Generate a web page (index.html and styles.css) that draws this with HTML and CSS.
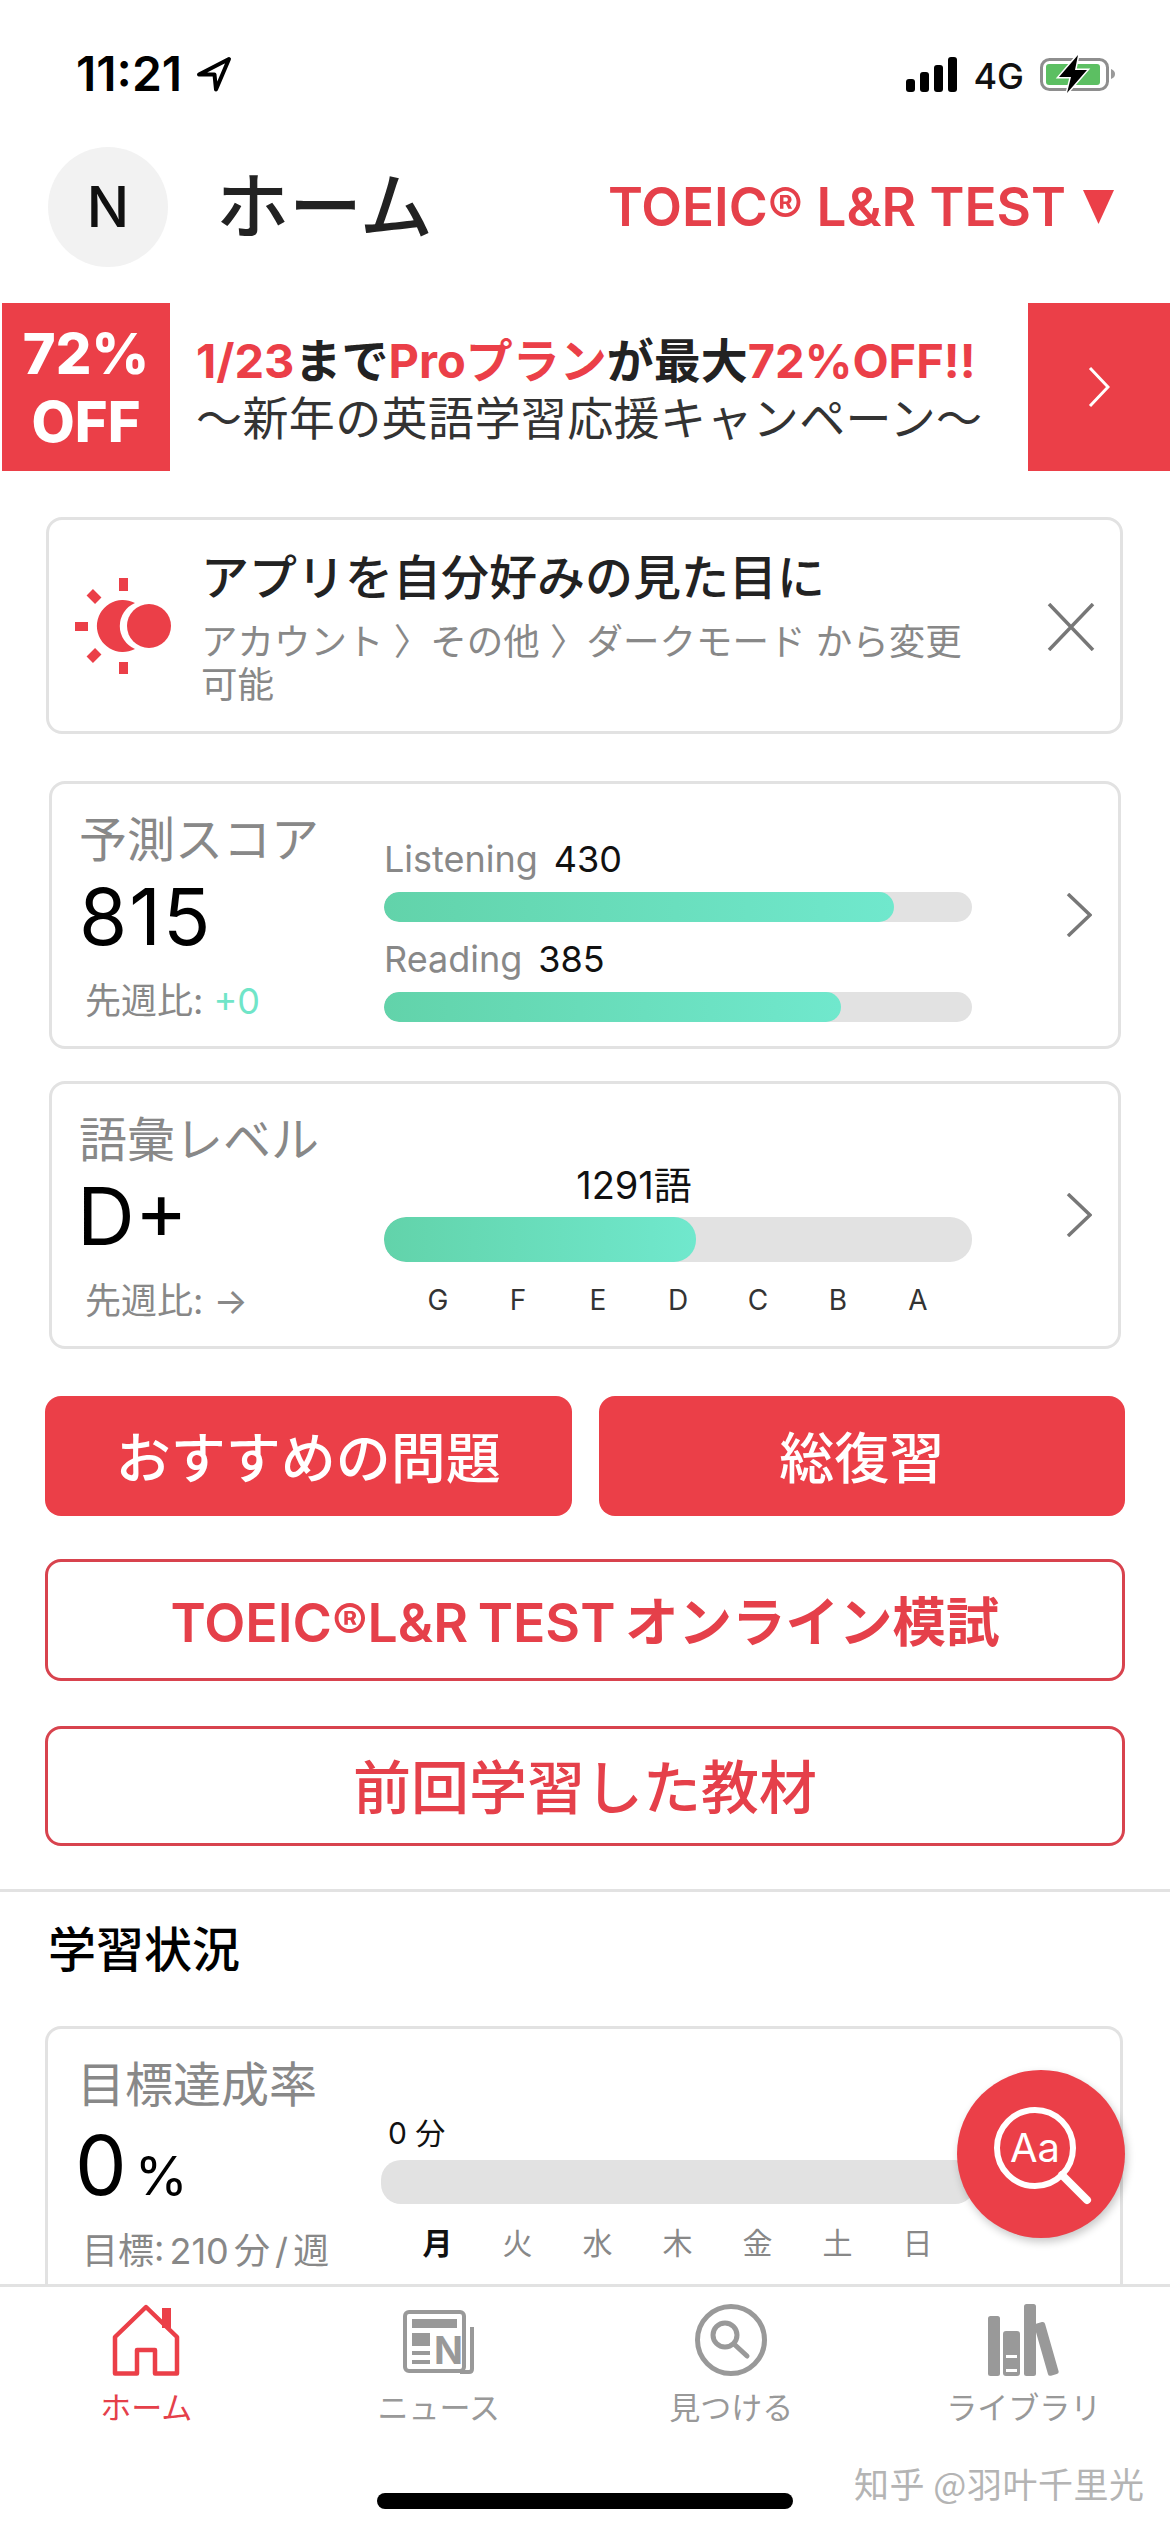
FILE: index.html
```html
<!DOCTYPE html>
<html lang="ja">
<head>
<meta charset="utf-8">
<title>ホーム</title>
<link rel="stylesheet" href="styles.css">
</head>
<body>
<div class="page">
  <main class="main">
    <div class="status">
      <div class="status-left">
        <span class="time">11:21</span>
        <svg class="loc" viewBox="0 0 36 36"><path d="M33 3 3 18.500h15.500L20 33.500z"/></svg>
      </div>
      <div class="status-right">
        <svg class="signal" viewBox="0 0 51 35"><rect x="0" y="22" width="9" height="13" rx="3"/><rect x="14" y="15" width="9" height="20" rx="3"/><rect x="28" y="8" width="9" height="27" rx="3"/><rect x="42" y="0" width="9" height="35" rx="3"/></svg>
        <span class="net">4G</span>
        <svg class="battery" viewBox="0 0 76 38"><rect class="batt-frame" x="1.500" y="4.500" width="66" height="30" rx="8"/><rect class="batt-level" x="6" y="9" width="54" height="21" rx="3"/><path class="batt-nub" d="M71 14c3 1 4 3 4 5s-1 4-4 5z"/><path class="batt-halo" d="M38 0 19 22h12l-4 16 20-23H35z"/><path class="batt-bolt" d="M38 0 19 22h12l-4 16 20-23H35z"/></svg>
      </div>
    </div>

    <header class="header">
      <div class="avatar">N</div>
      <h1 class="title">ホーム</h1>
      <div class="test-select">TOEIC® L&amp;R TEST<svg class="tri" viewBox="0 0 33 34"><path d="M1 0h31L16.500 34z"/></svg></div>
    </header>

    <section class="banner">
      <div class="banner-off"><span>72%</span><span>OFF</span></div>
      <div class="banner-text">
        <p class="banner-l1"><span class="red">1/23</span>まで<span class="red">Proプラン</span>が最大<span class="red">72%OFF!!</span></p>
        <p class="banner-l2">〜新年の英語学習応援キャンペーン〜</p>
      </div>
      <div class="banner-go"><svg class="banner-chev" viewBox="0 0 22 42"><path d="M2 2 20 21 2 40"/></svg></div>
    </section>

    <section class="notice">
      <svg class="sun" viewBox="0 0 97 96"><rect x="44" y="0" width="9" height="13"/><rect x="0" y="44" width="13" height="9"/><rect x="44" y="84" width="9" height="12"/><rect x="13" y="14" width="12" height="9" transform="rotate(45 19 18.500)"/><rect x="13" y="73" width="12" height="9" transform="rotate(-45 19 77.500)"/><path d="M60 25A26 26 0 1 0 60 71 25 25 0 0 1 60 25z"/><circle cx="74" cy="48" r="22"/></svg>
      <div class="notice-body">
        <h2 class="notice-title">アプリを自分好みの見た目に</h2>
        <p class="notice-sub">アカウント 〉その他 〉ダークモード から変更可能</p>
      </div>
      <svg class="close" viewBox="0 0 48 48"><path d="M2 1 46 47M46 1 2 47"/></svg>
    </section>

    <section class="card score-card">
      <div class="card-left">
        <div class="card-title">予測スコア</div>
        <div class="big">815</div>
        <div class="small">先週比: <span class="mint">+0</span></div>
      </div>
      <div class="card-mid">
        <div class="bar-label">Listening<b>430</b></div>
        <div class="bar"><div class="fill" style="width:510px"></div></div>
        <div class="bar-label second">Reading<b>385</b></div>
        <div class="bar"><div class="fill" style="width:457px"></div></div>
      </div>
      <svg class="chev" viewBox="0 0 26 44"><path d="M2 1 24 22 2 43"/></svg>
    </section>

    <section class="card vocab-card">
      <div class="card-left">
        <div class="card-title">語彙レベル</div>
        <div class="big big-d">D+</div>
        <div class="small small-v">先週比: →</div>
      </div>
      <div class="card-mid">
        <div class="count">1291語</div>
        <div class="bar bar-lg"><div class="fill" style="width:312px"></div></div>
        <div class="ticks"><span>G</span><span>F</span><span>E</span><span>D</span><span>C</span><span>B</span><span>A</span></div>
      </div>
      <svg class="chev" viewBox="0 0 26 44"><path d="M2 1 24 22 2 43"/></svg>
    </section>

    <div class="actions">
      <button class="btn solid">おすすめの問題</button>
      <button class="btn solid">総復習</button>
    </div>
    <button class="btn outline one">TOEIC®L&amp;R TEST オンライン模試</button>
    <button class="btn outline two">前回学習した教材</button>

    <div class="divider"></div>
    <h2 class="section-title">学習状況</h2>

    <section class="card goal-card">
      <div class="card-left">
        <div class="card-title">目標達成率</div>
        <div class="big big-zero">0<span class="pct">%</span></div>
        <div class="small small-g">目標: 210 分 / 週</div>
      </div>
      <div class="card-mid">
        <div class="minutes">0 分</div>
        <div class="bar bar-goal"></div>
        <div class="ticks days"><span class="today">月</span><span>火</span><span>水</span><span>木</span><span>金</span><span>土</span><span>日</span></div>
      </div>
    </section>
  </main>

  <nav class="nav">
    <div class="tabs">
      <div class="tab active">
        <svg class="tab-icon home" viewBox="-2 0 72 72"><path class="chimney" d="M50 4h9v20h-9z"/><path d="M34 3 3 33v36.500h22V46h18v23.500h22V33z"/></svg>
        <span>ホーム</span>
      </div>
      <div class="tab">
        <svg class="tab-icon" viewBox="0 0 72 72"><rect class="ln" x="2" y="8" width="59" height="59" rx="4"/><path class="ln" d="M69 23v42q0 3-3 3H57"/><rect x="9" y="15" width="45" height="9"/><rect x="9" y="29" width="18" height="13"/><rect x="9" y="47" width="18" height="4"/><rect x="9" y="56" width="18" height="4"/><text class="news-n" x="31" y="60">N</text></svg>
        <span>ニュース</span>
      </div>
      <div class="tab">
        <svg class="tab-icon" viewBox="0 0 72 72"><circle class="ln ln5" cx="36" cy="36" r="33.500"/><circle class="ln ln5" cx="30" cy="31" r="12"/><path class="ln ln5" d="M39 40 52 52"/></svg>
        <span>見つける</span>
      </div>
      <div class="tab">
        <svg class="tab-icon" viewBox="0 0 72 72"><rect x="0" y="12" width="12" height="60" rx="2.500"/><path fill-rule="evenodd" d="M18 27h11q3 0 3 3v39q0 3-3 3H18q-3 0-3-3V30q0-3 3-3zM18 51v3h11v-3zM18 65v3h11v-3z"/><rect x="36" y="0" width="12" height="72" rx="2.500"/><rect x="53" y="18" width="11" height="54" rx="2.500" transform="rotate(-16 58 45)"/></svg>
        <span>ライブラリ</span>
      </div>
    </div>
    <div class="home-bar"></div>
  </nav>

  <div class="fab">
    <svg class="fab-icon" viewBox="0 0 168 168"><circle class="fab-lens" cx="78" cy="78" r="38"/><path class="fab-lens fab-handle" d="M105 105 130 130"/><text class="fab-text" x="78" y="92">Aa</text></svg>
  </div>
  <div class="watermark">知乎 @羽叶千里光</div>
</div>
</body>
</html>
```
FILE: styles.css
```css
* { box-sizing: border-box; margin: 0; padding: 0; }
html, body { width: 1170px; height: 2532px; background: #fff; overflow: hidden; }
body { font-family: Inter, "Noto Sans CJK JP", sans-serif; color: #222; }
.page { position: relative; width: 1170px; height: 2532px; display: flex; flex-direction: column; overflow: hidden; background: #fff; }
.main { flex: 1; min-height: 0; overflow: hidden; }

/* status */
.status { height: 110px; display: flex; justify-content: space-between; padding: 56px 54px 0 76px; }
.status-left, .status-right { display: flex; align-items: flex-start; }
.time { font-size: 48px; font-weight: 600; line-height: 36px; letter-spacing: 0; color: #000; }
.loc { width: 36px; height: 36px; margin-left: 14px; fill: none; stroke: #000; stroke-width: 4; stroke-linejoin: round; }
.signal { width: 51px; height: 35px; fill: #000; margin-top: 1px; }
.net { font-size: 36px; line-height: 30px; margin: 5px 0 0 16px; font-weight: 500; color: #111; }
.battery { width: 76px; height: 38px; margin: -1px 0 0 16px; }
.batt-frame { fill: none; stroke: #8e8e8e; stroke-width: 3; }
.batt-level { fill: #5cbf62; }
.batt-nub { fill: #9a9a9a; }
.batt-halo { fill: none; stroke: #fff; stroke-width: 3; }
.batt-bolt { fill: #000; }

/* header */
.header { height: 193px; padding: 37px 55px 36px 48px; display: flex; align-items: center; }
.avatar { width: 120px; height: 120px; border-radius: 50%; background: #f2f2f2; display: flex; align-items: center; justify-content: center; font-size: 56px; font-weight: 500; color: #111; }
.title { font-size: 73px; font-weight: 500; margin-left: 48px; color: #222; line-height: 90px; }
.test-select { margin-left: auto; display: flex; align-items: center; font-size: 53px; font-weight: 600; color: #e5404a; line-height: 60px; white-space: nowrap; }
.tri { width: 33px; height: 34px; fill: #eb3f48; margin-left: 16px; }

/* banner */
.banner { height: 168px; margin-left: 2px; display: flex; }
.banner-off { width: 168px; padding-top: 2px; background: #eb3f48; color: #fff; display: flex; flex-direction: column; align-items: center; justify-content: center; font-size: 56px; font-weight: 800; line-height: 68px; }
.banner-text { flex: 1; padding: 28px 0 0 26px; white-space: nowrap; }
.banner-l1 { font-size: 47px; font-weight: 700; line-height: 60px; color: #222; }
.banner-l2 { font-size: 46px; line-height: 60px; letter-spacing: .4px; color: #333; margin-top: -3px; }
.red { color: #eb3f48; }
.banner-go { width: 142px; background: #eb3f48; display: flex; align-items: center; justify-content: center; }
.banner-chev { width: 22px; height: 42px; fill: none; stroke: #fff; stroke-width: 3; }

/* notice */
.notice { margin: 46px 47px 0 46px; height: 217px; border: 3px solid #e2e2e2; border-radius: 16px; display: flex; position: relative; }
.sun { width: 97px; height: 96px; fill: #eb3f48; margin: 58px 0 0 26px; flex: none; }
.notice-body { width: 780px; margin-left: 29px; padding-top: 27px; }
.notice-title { font-size: 48px; font-weight: 500; line-height: 62px; color: #222; }
.notice-sub { font-size: 36.500px; line-height: 43px; color: #888; margin-top: 12px; }
.close { width: 48px; height: 48px; fill: none; stroke: #777; stroke-width: 3.500; margin: 83px 0 0 0; position: absolute; right: 25px; top: 0; }

/* cards */
.card { margin: 0 49px; border: 3px solid #e2e2e2; border-radius: 16px; height: 268px; display: flex; }
.score-card { margin-top: 47px; }
.vocab-card { margin-top: 32px; }
.card-left { width: 332px; padding: 26px 0 0 27px; flex: none; }
.card-title { font-size: 48px; line-height: 60px; color: #888; white-space: nowrap; }
.big { font-size: 78px; line-height: 80px; color: #000; margin-top: 7px; letter-spacing: 2px; }
.small { font-size: 36px; line-height: 44px; color: #888; margin: 22px 0 0 6px; white-space: nowrap; }
.mint { color: #70e5c8; }
.card-mid { width: 588px; flex: none; }
.score-card .card-mid { padding-top: 53px; }
.bar-label { font-size: 36px; line-height: 44px; color: #888; white-space: nowrap; }
.bar-label b { font-weight: 400; color: #111; margin-left: 16px; }
.bar-label.second { margin-top: 15px; }
.bar { height: 30px; margin-top: 11px; border-radius: 15px; background: #e2e2e2; overflow: hidden; }
.fill { height: 100%; border-radius: 15px; background: linear-gradient(90deg, #62d3aa, #70e8cd); }
.chev { width: 26px; height: 44px; fill: none; stroke: #777; stroke-width: 3.500; margin: 109px 0 0 94px; flex: none; }
.vocab-card .card-mid { padding-top: 79px; }
.count { font-size: 38px; line-height: 44px; color: #111; text-align: center; margin-left: -88px; }
.count, .minutes { white-space: nowrap; }
.bar-lg { height: 45px; border-radius: 22px; margin-top: 10px; }
.bar-lg .fill { border-radius: 22px; }
.ticks { display: flex; justify-content: center; margin-top: 17px; font-size: 28px; line-height: 42px; color: #333; }
.ticks span { width: 80px; text-align: center; }
.big-d { margin: 6px 0 0 -2px; font-size: 80px; letter-spacing: 0; }
.small-v { margin-top: 23px; }
.actions { display: flex; gap: 27px; margin: 47px 45px 0; }
.btn { display: block; font-family: inherit; font-weight: 500; border-radius: 16px; white-space: nowrap; padding-bottom: 4px; }
.solid { flex: 1; height: 120px; border: 0; background: #eb3f48; color: #fff; font-size: 55px; }
.outline { width: 1080px; margin-left: 45px; background: #fff; border: 3px solid #d8434e; color: #e5404a; }
.one { height: 122px; margin-top: 43px; font-size: 53.500px; font-weight: 600; word-spacing: -4px; }
.two { height: 120px; margin-top: 45px; font-size: 58px; }
.divider { height: 3px; background: #e2e2e2; margin-top: 43px; }
.section-title { font-size: 48px; font-weight: 500; line-height: 60px; color: #000; margin: 28px 0 0 48px; }
.goal-card { margin: 46px 47px 0 45px; border-bottom: 0; height: 300px; }
.goal-card .card-left { width: 333px; padding-left: 30px; }
.goal-card .card-left .card-title { margin-left: -1px; }
.goal-card .card-mid { padding-top: 84px; }
.big-zero { margin: 11px 0 0 -3px; font-size: 82px; letter-spacing: 0; }
.pct { font-size: 54px; margin-left: 8px; }
.small-g { margin: 13px 0 0 4px; word-spacing: -5px; }
.minutes { font-size: 30px; line-height: 40px; color: #111; padding-left: 7px; }
.bar-goal { height: 44px; border-radius: 20px; margin-top: 7px; width: 594px; }
.days { font-size: 30px; margin-top: 18px; color: #888; padding-left: 5px; }
.today { color: #111; font-weight: 700; }

/* nav */
.nav { height: 248px; flex: none; border-top: 3px solid #e2e2e2; background: #fff; position: relative; }
.tabs { display: grid; grid-template-columns: repeat(4, 1fr); padding-top: 17px; }
.tab { display: flex; flex-direction: column; align-items: center; font-size: 31px; line-height: 40px; color: #999; }
.tab-icon { width: 72px; height: 72px; fill: #999; margin-bottom: 12px; }
.tab.active { color: #e5404a; }
.home { fill: none; stroke: #eb3f48; stroke-width: 4.500; stroke-linejoin: round; }
.chimney { fill: #eb3f48; stroke: none; }
.ln { fill: none; stroke: #999; stroke-width: 4; }
.ln5 { stroke-width: 5; stroke-linecap: round; }
.news-n { font-family: Inter, sans-serif; font-weight: 700; font-size: 38px; fill: #999; }
.home-bar { position: absolute; left: 377px; top: 206px; width: 416px; height: 16px; border-radius: 8px; background: #000; }

/* overlays */
.fab { position: absolute; left: 957px; top: 2070px; width: 168px; height: 168px; border-radius: 50%; background: #eb3f48; box-shadow: 2px 4px 8px rgba(0,0,0,.22); }
.fab-icon { width: 168px; height: 168px; display: block; }
.fab-lens { fill: none; stroke: #fff; stroke-width: 6; }
.fab-handle { stroke-width: 8; stroke-linecap: round; }
.fab-text { font-family: Inter, sans-serif; font-size: 40px; fill: #fff; text-anchor: middle; }
.watermark { position: absolute; left: 854px; top: 2461px; font-family: "Noto Sans CJK SC", sans-serif; font-size: 35px; letter-spacing: .5px; line-height: 44px; color: #b4b4b4; white-space: nowrap; }
```
